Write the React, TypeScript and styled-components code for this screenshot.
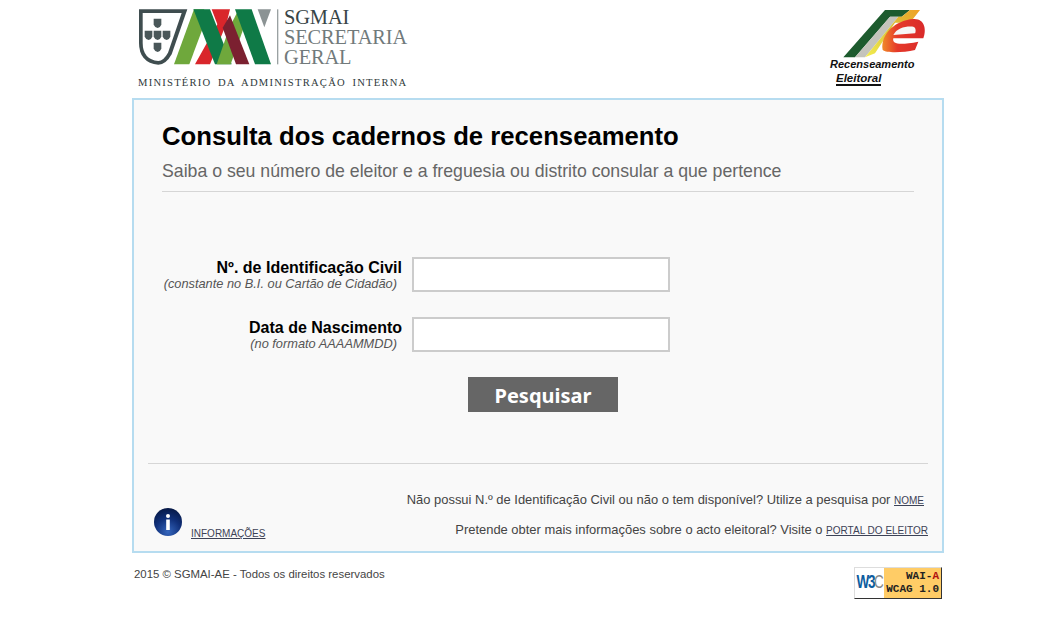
import React from "react";
import styled, { createGlobalStyle } from "styled-components";

const Global = createGlobalStyle`
  html, body { margin: 0; padding: 0; background: #fff; }
  body { font-family: "Liberation Sans", Arial, sans-serif; color: #000; }
`;
const Page = styled.div`width: 812px; margin-left: 132px; height: 618px; overflow: hidden;`;
const Header = styled.header`display: flex; justify-content: space-between; height: 98px;`;
const Sgmai = styled.div`display: flex; flex-direction: column; margin-left: 6px; padding-top: 8px;`;
const SgmaiTop = styled.div`display: flex; gap: 5px; height: 58px; align-items: flex-start;`;
const SgmaiWords = styled.div`display: flex; flex-direction: column; margin-top: -1px;`;
const SgmaiWord = styled.span<{ $dark?: boolean }>`
  font: 20.4px/20px "Liberation Serif", serif;
  letter-spacing: -0.1px;
  color: ${(p) => (p.$dark ? "#384547" : "#717a7b")};
`;
const Ministry = styled.div`
  font: 10.6px/12px "Liberation Serif", serif;
  color: #2f3a3b;
  letter-spacing: 1.23px;
  word-spacing: 2.6px;
  margin-top: 11px;
  white-space: nowrap;
`;
const Rec = styled.div`position: relative; width: 100px; height: 90px; margin: 8px 17px 0 0;`;
const RecWord = styled.span<{ $x: number; $y: number; $size: number; $line?: boolean }>`
  position: absolute; left: ${(p) => p.$x}px; top: ${(p) => p.$y}px;
  font: italic bold ${(p) => p.$size}px/12px "Liberation Sans", sans-serif;
  color: #111; white-space: nowrap;
  ${(p) => (p.$line ? "border-bottom: 2px solid #111;" : "")}
`;
const Panel = styled.main`
  box-sizing: border-box; height: 455px; border: 2px solid #b6dcf0; background: #f9f9f9;
  display: flex; flex-direction: column;
`;
const Intro = styled.div`margin: 0 28px; height: 92px; box-sizing: border-box; border-bottom: 1px solid #d6d6d6; overflow: hidden;`;
const Title = styled.h1`margin: 21px 0 0; font: bold 25.7px/30px "Liberation Sans", sans-serif; color: #000;`;
const Sub = styled.p`margin: 9px 0 0; font: 17.7px/22px "Liberation Sans", sans-serif; color: #666;`;
const Form = styled.form`display: flex; flex-direction: column; gap: 25px; padding-top: 65px; height: 271px; box-sizing: border-box;`;
const Row = styled.div`display: grid; grid-template-columns: 268px 258px; column-gap: 10px; height: 35px;`;
const LabelBox = styled.div`display: flex; flex-direction: column; align-items: flex-end; padding-top: 2px;`;
const Label = styled.label`font: bold 16px/18px "Liberation Sans", sans-serif; color: #000;`;
const Hint = styled.span`font: italic 12.8px/14px "Liberation Sans", sans-serif; color: #555; margin-right: 5px;`;
const Input = styled.input`box-sizing: border-box; width: 258px; height: 35px; border: 2px solid #ccc; background: #fff; padding: 0; outline: none;`;
const Button = styled.button`
  display: block; box-sizing: border-box; width: 150px; height: 35px; margin: 0 0 0 334px; border: 0; padding: 3px 0 0;
  background: #666; color: #fff; font: bold 20px/32px "Noto Sans", "Open Sans", sans-serif;
`;
const Divider = styled.hr`margin: 0 14px; border: 0; border-top: 1px solid #d6d6d6; height: 0;`;
const Foot = styled.div`flex: 1; position: relative; display: flex; flex-direction: column; align-items: flex-end; padding: 28px 14px 0 0; gap: 14px;`;
const FootLine = styled.p<{ $inset?: number }>`margin: 0 ${(p) => p.$inset ?? 0}px 0 0; font: 12.95px/15px "Liberation Sans", sans-serif; color: #444;`;
const Link = styled.a`font-size: 10px; color: #3c4256; text-decoration: underline;`;
const Info = styled.div`position: absolute; left: 20px; bottom: 15px; display: flex; align-items: flex-end; gap: 9px;`;
const InfoLink = styled(Link)`line-height: 13px; margin-bottom: -4px;`;
const Bottom = styled.footer`display: flex; justify-content: space-between; align-items: flex-start; padding: 14px 2px 0;`;
const Copy = styled.span`font: 11.4px/14px "Liberation Sans", sans-serif; color: #444;`;
const Badge = styled.div`
  display: flex; width: 88px; height: 32px; box-sizing: border-box; border: 1px solid #ddd; border-right: 1px solid #333; border-bottom: 1px solid #333;
`;
const BadgeW3 = styled.div`width: 29px; background: #fff; display: flex; align-items: center; justify-content: center; font: bold 13.5px/1 "Liberation Sans", sans-serif; letter-spacing: -1.3px; color: #0d5c9e; white-space: nowrap; transform-origin: center; & > span { display: inline-block; transform: scaleY(1.3); }`;
const BadgeC = styled.span`color: #888; font-weight: normal;`;
const BadgeMark = styled.span`white-space: nowrap;`;
const BadgeText = styled.div`flex: 1; background: #fc6; display: flex; flex-direction: column; align-items: flex-end; justify-content: center; padding-right: 2px; font: bold 11px/13px "Liberation Mono", monospace; color: #222; white-space: nowrap;`;
const Red = styled.span`color: #b01010;`;

const Emblem = () => (
  <svg width="141" height="58" viewBox="24 26 423 174" aria-hidden="true">
    <path d="M27 30H172L125 165Q108 196 85 196Q27 190 27 130Z" fill="#3f4d4f" />
    <path d="M38 41H155L114 160Q100 185 85 185Q38 180 38 130Z" fill="#fff" />
    {[[71, 58], [44, 94], [71, 94], [98, 94], [71, 130]].map(([x, y]) => (
      <path key={`${x}-${y}`} d={`M${x} ${y}h23v18q-3 8-11 10q-9-2-12-10z`} fill="#4a5759" />
    ))}
    <path d="M132 195H178L232 50L222 30H192Z" fill="#6fa83c" />
    <path d="M195 195H240L290 70L300 30H245L262 75Z" fill="#d9262b" />
    <path d="M190 30H240L305 195H255Z" fill="#0f7a47" />
    <path d="M260 195H302L345 75L322 38L298 85Z" fill="#6fa83c" />
    <path d="M278 85L300 48L358 195H318Z" fill="#7b2030" />
    <path d="M315 30H365L423 195H375Z" fill="#0f7a47" />
    <path d="M383 30H423L403 84Z" fill="#8b9394" />
    <rect x="441" y="30" width="4" height="165" fill="#9aa1a2" />
  </svg>
);

const RecLogo = () => (
  <svg width="100" height="60" viewBox="51 24 300 180" aria-hidden="true">
    <defs>
      <linearGradient id="sweep" x1="0" y1="1" x2="1" y2="0">
        <stop offset="0" stopColor="#f4ee50" />
        <stop offset="0.55" stopColor="#d9c23a" />
        <stop offset="1" stopColor="#f0a126" />
      </linearGradient>
      <linearGradient id="ered" x1="0" y1="0" x2="1" y2="0">
        <stop offset="0" stopColor="#f08a28" />
        <stop offset="0.35" stopColor="#e5392a" />
        <stop offset="1" stopColor="#d92a2a" />
      </linearGradient>
    </defs>
    <path d="M100 172L225 30H300L275 50H240L135 172Z" fill="#1d5b2e" />
    <path d="M135 172L240 50H265L165 172Z" fill="#c4c4bc" />
    <path d="M165 172L265 50H275L300 30H330L300 68H255L195 160Z" fill="url(#sweep)" />
    <path d="M218 150C210 100 260 60 310 57C345 55 350 90 340 115H250C245 135 275 135 325 125L315 150C280 158 230 160 218 150Z" fill="url(#ered)" />
    <path d="M250 105C260 85 285 78 310 80C318 82 318 95 315 100Z" fill="#f6f6f6" />
  </svg>
);

export default function App() {
  return (
    <>
      <Global />
      <Page>
        <Header>
          <Sgmai>
            <SgmaiTop>
              <Emblem />
              <SgmaiWords>
                <SgmaiWord $dark>SGMAI</SgmaiWord>
                <SgmaiWord>SECRETARIA</SgmaiWord>
                <SgmaiWord>GERAL</SgmaiWord>
              </SgmaiWords>
            </SgmaiTop>
            <Ministry>MINISTÉRIO DA ADMINISTRAÇÃO INTERNA</Ministry>
          </Sgmai>
          <Rec>
            <RecLogo />
            <RecWord $x={3} $y={50} $size={11}>Recenseamento</RecWord>
            <RecWord $x={9} $y={64} $size={11.5} $line>Eleitoral</RecWord>
          </Rec>
        </Header>
        <Panel>
          <Intro>
            <Title>Consulta dos cadernos de recenseamento</Title>
            <Sub>Saiba o seu número de eleitor e a freguesia ou distrito consular a que pertence</Sub>
          </Intro>
          <Form>
            <Row>
              <LabelBox>
                <Label>Nº. de Identificação Civil</Label>
                <Hint>(constante no B.I. ou Cartão de Cidadão)</Hint>
              </LabelBox>
              <Input />
            </Row>
            <Row>
              <LabelBox>
                <Label>Data de Nascimento</Label>
                <Hint>(no formato AAAAMMDD)</Hint>
              </LabelBox>
              <Input />
            </Row>
            <Button type="button">Pesquisar</Button>
          </Form>
          <Divider />
          <Foot>
            <FootLine $inset={4}>Não possui N.º de Identificação Civil ou não o tem disponível? Utilize a pesquisa por <Link>NOME</Link></FootLine>
            <FootLine>Pretende obter mais informações sobre o acto eleitoral? Visite o <Link>PORTAL DO ELEITOR</Link></FootLine>
            <Info>
              <svg width="28" height="28" viewBox="0 0 28 28" aria-hidden="true">
                <defs>
                  <radialGradient id="orb" cx="0.5" cy="0.85" r="0.85">
                    <stop offset="0" stopColor="#3566bd" />
                    <stop offset="0.55" stopColor="#10307a" />
                    <stop offset="1" stopColor="#061845" />
                  </radialGradient>
                </defs>
                <circle cx="14" cy="14" r="14" fill="url(#orb)" />
                <circle cx="14" cy="8" r="2" fill="#fff" />
                <rect x="12.2" y="11.5" width="3.6" height="10.5" fill="#fff" />
              </svg>
              <InfoLink>INFORMAÇÕES</InfoLink>
            </Info>
          </Foot>
        </Panel>
        <Bottom>
          <Copy>2015 © SGMAI-AE - Todos os direitos reservados</Copy>
          <Badge>
            <BadgeW3><BadgeMark>W3<BadgeC>C</BadgeC></BadgeMark></BadgeW3>
            <BadgeText>
              <span>WAI-<Red>A</Red></span>
              <span>WCAG 1.0</span>
            </BadgeText>
          </Badge>
        </Bottom>
      </Page>
    </>
  );
}
